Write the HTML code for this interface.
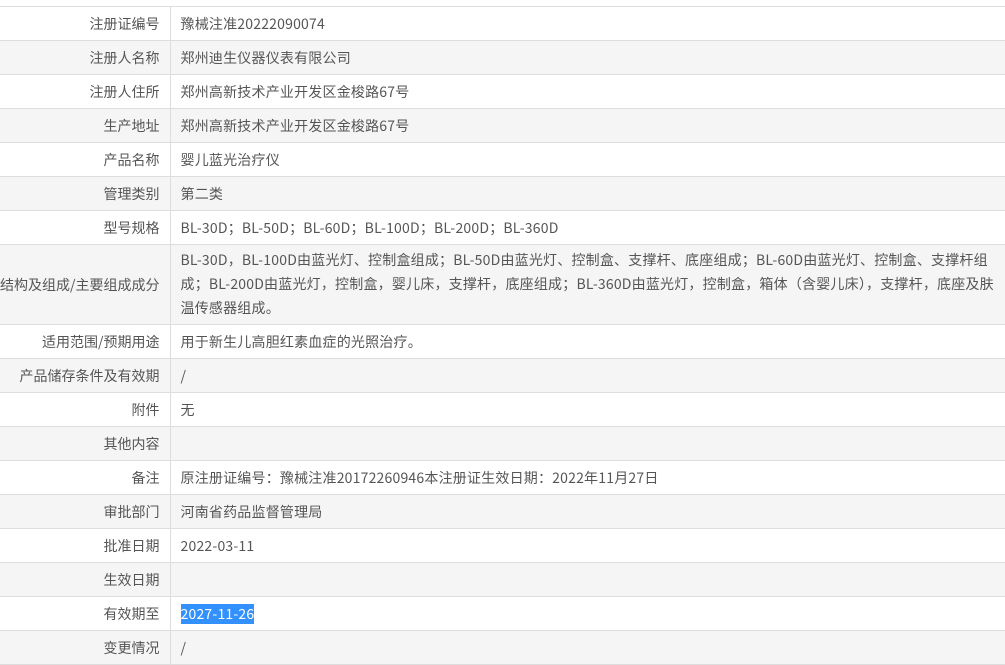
<!DOCTYPE html>
<html><head><meta charset="utf-8"><style>
body{margin:0;background:#fff;font-family:"Noto Sans CJK SC","Liberation Sans",sans-serif;font-size:14px;color:#555;}
table{position:absolute;top:6px;left:0;width:1010px;border-collapse:collapse;}
td{border-top:1px solid #ddd;border-bottom:1px solid #ddd;height:33px;padding:0 10px;line-height:24px;box-sizing:border-box;letter-spacing:0.2px;}
tr{height:34px;}
td.l{width:169px;text-align:right;border-right:1px solid #ddd;color:#555;letter-spacing:0;}
tr:nth-child(even) td{background:#f5f5f5;}
td.m{padding:3px 10px 4px 10px;}
.sel{background:#3390ff;color:#fff;}
</style></head><body>
<table>
<tr><td class="l">注册证编号</td><td>豫械注准20222090074</td></tr>
<tr><td class="l">注册人名称</td><td>郑州迪生仪器仪表有限公司</td></tr>
<tr><td class="l">注册人住所</td><td>郑州高新技术产业开发区金梭路67号</td></tr>
<tr><td class="l">生产地址</td><td>郑州高新技术产业开发区金梭路67号</td></tr>
<tr><td class="l">产品名称</td><td>婴儿蓝光治疗仪</td></tr>
<tr><td class="l">管理类别</td><td>第二类</td></tr>
<tr><td class="l">型号规格</td><td>BL-30D；BL-50D；BL-60D；BL-100D；BL-200D；BL-360D</td></tr>
<tr style="height:80px"><td class="l" style="white-space:nowrap;padding-left:0">结构及组成/主要组成成分</td><td class="m">BL-30D，BL-100D由蓝光灯、控制盒组成；BL-50D由蓝光灯、控制盒、支撑杆、底座组成；BL-60D由蓝光灯、控制盒、支撑杆组成；BL-200D由蓝光灯，控制盒，婴儿床，支撑杆，底座组成；BL-360D由蓝光灯，控制盒，箱体（含婴儿床），支撑杆，底座及肤温传感器组成。</td></tr>
<tr><td class="l">适用范围/预期用途</td><td>用于新生儿高胆红素血症的光照治疗。</td></tr>
<tr><td class="l">产品储存条件及有效期</td><td>/</td></tr>
<tr><td class="l">附件</td><td>无</td></tr>
<tr><td class="l">其他内容</td><td></td></tr>
<tr><td class="l">备注</td><td>原注册证编号：豫械注准20172260946本注册证生效日期：2022年11月27日</td></tr>
<tr><td class="l">审批部门</td><td>河南省药品监督管理局</td></tr>
<tr><td class="l">批准日期</td><td>2022-03-11</td></tr>
<tr><td class="l">生效日期</td><td></td></tr>
<tr><td class="l">有效期至</td><td><span class="sel">2027-11-26</span></td></tr>
<tr><td class="l">变更情况</td><td>/</td></tr>
</table>
</body></html>
